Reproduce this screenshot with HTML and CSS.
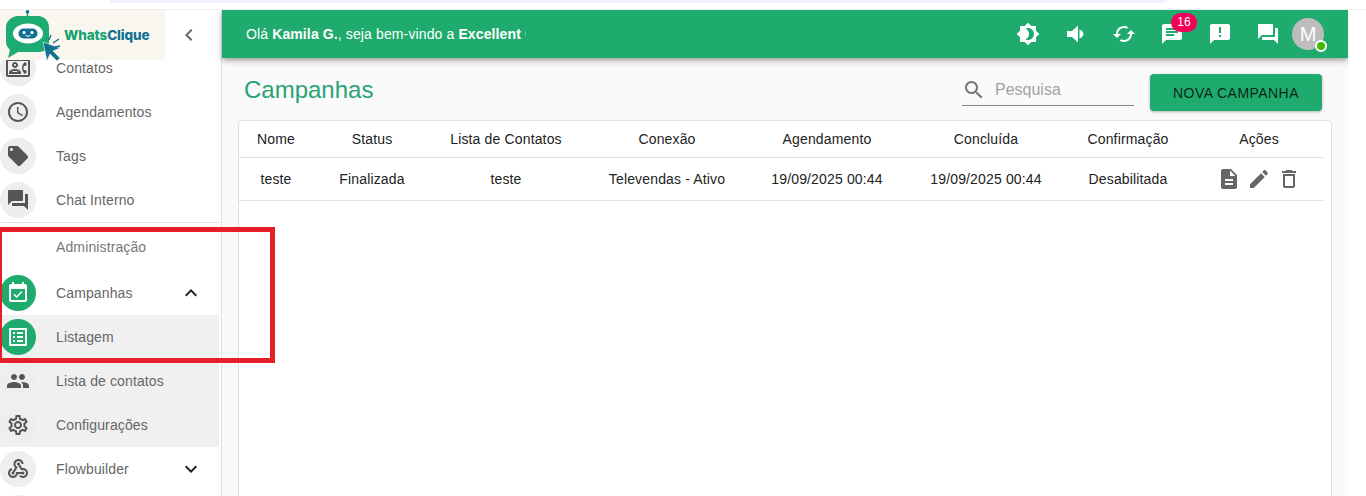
FILE: index.html
```html
<!DOCTYPE html>
<html lang="pt-BR">
<head>
<meta charset="utf-8">
<title>WhatsClique - Campanhas</title>
<link rel="stylesheet" href="styles.css">
</head>
<body>
<svg class="defs" aria-hidden="true">
  <symbol id="i-contact" viewBox="0 0 24 24"><path d="M22 3H2C.9 3 0 3.9 0 5v14c0 1.1.9 2 2 2h20c1.1 0 1.99-.9 1.99-2L24 5c0-1.1-.9-2-2-2zm0 16H2V5h20v14zm-2.99-1.01L21 16l-1.51-2h-1.64c-.22-.63-.35-1.3-.35-2s.13-1.37.35-2h1.64L21 8l-1.99-1.99c-1.31.98-2.28 2.37-2.73 3.99-.18.64-.28 1.31-.28 2s.1 1.36.28 2c.45 1.61 1.42 3.01 2.73 3.99zM9 12c1.65 0 3-1.35 3-3s-1.35-3-3-3-3 1.35-3 3 1.35 3 3 3zm0-4c.55 0 1 .45 1 1s-.45 1-1 1-1-.45-1-1 .45-1 1-1zm6 8.59c0-2.5-3.97-3.58-6-3.58s-6 1.08-6 3.58V18h12v-1.41zM5.48 16c.74-.5 2.22-1 3.52-1s2.77.49 3.52 1H5.48z"/></symbol>
  <symbol id="i-clock" viewBox="0 0 24 24"><path d="M11.99 2C6.47 2 2 6.48 2 12s4.47 10 9.99 10C17.52 22 22 17.52 22 12S17.52 2 11.99 2zM12 20c-4.42 0-8-3.58-8-8s3.58-8 8-8 8 3.58 8 8-3.58 8-8 8z"/><path d="M12.5 7H11v6l5.25 3.15.75-1.23-4.5-2.67z"/></symbol>
  <symbol id="i-tag" viewBox="0 0 24 24"><path d="M21.41 11.58l-9-9C12.05 2.22 11.55 2 11 2H4c-1.1 0-2 .9-2 2v7c0 .55.22 1.05.59 1.42l9 9c.36.36.86.58 1.41.58.55 0 1.05-.22 1.41-.59l7-7c.37-.36.59-.86.59-1.41 0-.55-.23-1.06-.59-1.42zM5.5 7C4.67 7 4 6.33 4 5.5S4.67 4 5.5 4 7 4.67 7 5.5 6.33 7 5.5 7z"/></symbol>
  <symbol id="i-forum" viewBox="0 0 24 24"><path d="M21 6h-2v9H6v2c0 .55.45 1 1 1h11l4 4V7c0-.55-.45-1-1-1zm-4 6V3c0-.55-.45-1-1-1H3c-.55 0-1 .45-1 1v14l4-4h10c.55 0 1-.45 1-1z"/></symbol>
  <symbol id="i-event" viewBox="0 0 24 24"><path d="M16.53 11.06L15.47 10l-4.88 4.88-2.12-2.12-1.06 1.06L10.59 17l5.94-5.94zM19 3h-1V1h-2v2H8V1H6v2H5c-1.11 0-1.99.9-1.99 2L3 19c0 1.1.89 2 2 2h14c1.1 0 2-.9 2-2V5c0-1.1-.9-2-2-2zm0 16H5V8h14v11z"/></symbol>
  <symbol id="i-list" viewBox="0 0 24 24"><path d="M19 5v14H5V5h14m1.1-2H3.9c-.5 0-.9.4-.9.9v16.2c0 .4.4.9.9.9h16.2c.4 0 .9-.5.9-.9V3.9c0-.5-.5-.9-.9-.9zM11 7h6v2h-6V7zm0 4h6v2h-6v-2zm0 4h6v2h-6zM7 7h2v2H7zm0 4h2v2H7zm0 4h2v2H7z"/></symbol>
  <symbol id="i-people" viewBox="0 0 24 24"><path d="M16 11c1.66 0 2.99-1.34 2.99-3S17.66 5 16 5c-1.66 0-3 1.34-3 3s1.34 3 3 3zm-8 0c1.66 0 2.99-1.34 2.99-3S9.66 5 8 5C6.34 5 5 6.34 5 8s1.34 3 3 3zm0 2c-2.33 0-7 1.17-7 3.5V19h14v-2.5c0-2.33-4.67-3.5-7-3.5zm8 0c-.29 0-.62.02-.97.05 1.16.84 1.97 1.97 1.97 3.45V19h6v-2.5c0-2.33-4.67-3.5-7-3.5z"/></symbol>
  <symbol id="i-gear" viewBox="0 0 24 24"><path d="M19.43 12.98c.04-.32.07-.64.07-.98 0-.34-.03-.66-.07-.98l2.11-1.65c.19-.15.24-.42.12-.64l-2-3.46c-.09-.16-.26-.25-.44-.25-.06 0-.12.01-.17.03l-2.49 1c-.52-.4-1.08-.73-1.69-.98l-.38-2.65C14.46 2.18 14.25 2 14 2h-4c-.25 0-.46.18-.49.42l-.38 2.65c-.61.25-1.17.59-1.69.98l-2.49-1c-.06-.02-.12-.03-.18-.03-.17 0-.34.09-.43.25l-2 3.46c-.13.22-.07.49.12.64l2.11 1.65c-.04.32-.07.65-.07.98 0 .33.03.66.07.98l-2.11 1.65c-.19.15-.24.42-.12.64l2 3.46c.09.16.26.25.44.25.06 0 .12-.01.17-.03l2.49-1c.52.4 1.08.73 1.69.98l.38 2.65c.03.24.24.42.49.42h4c.25 0 .46-.18.49-.42l.38-2.65c.61-.25 1.17-.59 1.69-.98l2.49 1c.06.02.12.03.18.03.17 0 .34-.09.43-.25l2-3.46c.12-.22.07-.49-.12-.64l-2.11-1.65zm-1.98-1.71c.04.31.05.52.05.73 0 .21-.02.43-.05.73l-.14 1.13.89.7 1.08.84-.7 1.21-1.27-.51-1.04-.42-.9.68c-.43.32-.84.56-1.25.73l-1.06.43-.16 1.13-.2 1.35h-1.4l-.19-1.35-.16-1.13-1.06-.43c-.43-.18-.83-.41-1.23-.71l-.91-.7-1.06.43-1.27.51-.7-1.21 1.08-.84.89-.7-.14-1.13c-.03-.31-.05-.54-.05-.74s.02-.43.05-.73l.14-1.13-.89-.7-1.08-.84.7-1.21 1.27.51 1.04.42.9-.68c.43-.32.84-.56 1.25-.73l1.06-.43.16-1.13.2-1.35h1.39l.19 1.35.16 1.13 1.06.43c.43.18.83.41 1.23.71l.91.7 1.06-.43 1.27-.51.7 1.21-1.07.85-.89.7.14 1.13zM12 8c-2.21 0-4 1.79-4 4s1.79 4 4 4 4-1.79 4-4-1.79-4-4-4zm0 6c-1.1 0-2-.9-2-2s.9-2 2-2 2 .9 2 2-.9 2-2 2z"/></symbol>
  <symbol id="i-webhook" viewBox="0 0 24 24"><path d="M10 15h5.88c.27-.31.67-.5 1.12-.5.83 0 1.5.67 1.5 1.5s-.67 1.5-1.5 1.5c-.44 0-.84-.19-1.12-.5H11.9c-.46 2.28-2.48 4-4.9 4-2.76 0-5-2.24-5-5 0-2.42 1.72-4.44 4-4.9v2.07c-1.16.41-2 1.53-2 2.83 0 1.65 1.35 3 3 3s3-1.35 3-3v-1zm2.5-11c1.65 0 3 1.35 3 3h2c0-2.76-2.24-5-5-5s-5 2.24-5 5c0 1.43.6 2.71 1.55 3.62l-2.35 3.9c-.68.14-1.2.75-1.2 1.48 0 .83.67 1.5 1.5 1.5s1.5-.67 1.5-1.5c0-.16-.02-.31-.07-.45l3.38-5.63C10.49 9.61 9.5 8.42 9.5 7c0-1.65 1.35-3 3-3zm4.5 9c-.64 0-1.23.2-1.72.54l-3.05-5.07C11.53 8.35 11 7.74 11 7c0-.83.67-1.5 1.5-1.5S14 6.17 14 7c0 .15-.02.29-.06.43l2.19 3.65c.28-.05.57-.08.87-.08 2.76 0 5 2.24 5 5s-2.24 5-5 5c-1.85 0-3.47-1.01-4.33-2.5h2.67c.48.32 1.05.5 1.66.5 1.65 0 3-1.35 3-3s-1.35-3-3-3z"/></symbol>
  <symbol id="i-left" viewBox="0 0 24 24"><path d="M15.41 7.41L14 6l-6 6 6 6 1.41-1.41L10.83 12z"/></symbol>
  <symbol id="i-less" viewBox="0 0 24 24"><path d="M12 8l-6 6 1.41 1.41L12 10.83l4.59 4.58L18 14z"/></symbol>
  <symbol id="i-more" viewBox="0 0 24 24"><path d="M16.59 8.59L12 13.17 7.41 8.59 6 10l6 6 6-6z"/></symbol>
  <symbol id="i-bright" viewBox="0 0 24 24"><path d="M20 8.69V4h-4.69L12 .69 8.69 4H4v4.69L.69 12 4 15.31V20h4.69L12 23.31 15.31 20H20v-4.69L23.31 12 20 8.69zM12 18c-.89 0-1.74-.2-2.5-.55C11.56 16.5 13 14.42 13 12s-1.44-4.5-3.5-5.45C10.26 6.2 11.11 6 12 6c3.31 0 6 2.69 6 6s-2.69 6-6 6z"/></symbol>
  <symbol id="i-volume" viewBox="0 0 24 24"><path d="M3 9v6h5l6 5.500V3.500L8 9H3zM15.500 7.500v9c2.500-1 4-2.700 4-4.500s-1.500-3.500-4-4.500z"/></symbol>
  <symbol id="i-cached" viewBox="0 0 24 24"><path d="M19 8l-4 4h3c0 3.31-2.69 6-6 6-1.01 0-1.97-.25-2.8-.7l-1.46 1.46C8.97 19.54 10.43 20 12 20c4.42 0 8-3.58 8-8h3l-4-4zM6 12c0-3.31 2.69-6 6-6 1.01 0 1.97.25 2.8.7l1.46-1.46C15.03 4.46 13.57 4 12 4c-4.42 0-8 3.58-8 8H1l4 4 4-4H6z"/></symbol>
  <symbol id="i-chat" viewBox="0 0 24 24"><path d="M20 2H4c-1.1 0-1.99.9-1.99 2L2 22l4-4h14c1.1 0 2-.9 2-2V4c0-1.1-.9-2-2-2zM6 9h12v2H6V9zm8 5H6v-2h8v2zm4-6H6V6h12v2z"/></symbol>
  <symbol id="i-alert" viewBox="0 0 24 24"><path d="M20 2H4c-1.1 0-1.99.9-1.99 2L2 22l4-4h14c1.1 0 2-.9 2-2V4c0-1.1-.9-2-2-2zm-7 9h-2V5h2v6zm0 4h-2v-2h2v2z"/></symbol>
  <symbol id="i-search" viewBox="0 0 24 24"><path d="M15.5 14h-.79l-.28-.27C15.41 12.59 16 11.11 16 9.5 16 5.91 13.09 3 9.5 3S3 5.91 3 9.5 5.91 16 9.5 16c1.61 0 3.09-.59 4.23-1.57l.27.28v.79l5 4.99L20.49 19l-4.99-5zm-6 0C7.01 14 5 11.99 5 9.5S7.01 5 9.5 5 14 7.01 14 9.5 11.99 14 9.5 14z"/></symbol>
  <symbol id="i-doc" viewBox="0 0 24 24"><path d="M14 2H6c-1.1 0-1.99.9-1.99 2L4 20c0 1.1.89 2 1.99 2H18c1.1 0 2-.9 2-2V8l-6-6zm2 16H8v-2h8v2zm0-4H8v-2h8v2zm-3-5V3.5L18.5 9H13z"/></symbol>
  <symbol id="i-edit" viewBox="0 0 24 24"><path d="M3 17.25V21h3.75L17.81 9.94l-3.75-3.75L3 17.25zM20.71 7.04c.39-.39.39-1.02 0-1.41l-2.34-2.34c-.39-.39-1.02-.39-1.41 0l-1.83 1.83 3.75 3.75 1.83-1.83z"/></symbol>
  <symbol id="i-trash" viewBox="0 0 24 24"><path d="M6 19c0 1.1.9 2 2 2h8c1.1 0 2-.9 2-2V7H6v12zM8 9h8v10H8V9zm7.5-5l-1-1h-5l-1 1H5v2h14V4z"/></symbol>
</svg>

<div class="tabstrip"><div class="tabstrip-fill"></div></div>

<div class="app">
  <aside class="sidebar">
    <div class="brand">
      <div class="logo">
        <svg class="logo-mark" viewBox="0 0 64 50">
          <path d="M27.500 1v7" stroke="#15a06d" stroke-width="1.500"/>
          <circle cx="27.500" cy="1.800" r="1.800" fill="#10708f"/>
          <path d="M18 6h20c6 0 11 5 11 11v15c0 6-4 10-10 10H18l-10 6 2-8c-2-2-4-5-4-8V17C6 11 12 6 18 6z" fill="#1cab72"/>
          <ellipse cx="28" cy="23.500" rx="15" ry="10" fill="#fff"/>
          <rect x="18.500" y="18.500" width="19" height="10" rx="5" fill="#10708f"/>
          <circle cx="24" cy="22.500" r="1.600" fill="#fff"/>
          <circle cx="32" cy="22.500" r="1.600" fill="#fff"/>
          <path d="M25.500 25.500q2.500 1.500 5 0" stroke="#fff" stroke-width="1" fill="none"/>
          <path d="M43 32l17 6-7 3 7 7-3 3-7-7-3 7z" fill="#10708f" stroke="#f9f6f0" stroke-width=".6"/>
          <path d="M49 30l2-5M53 33l6-4M55 37l5-1" stroke="#10708f" stroke-width="1.300"/>
        </svg>
        <span class="logo-name"><span class="logo-green">Whats</span><span class="logo-blue">Clique</span></span>
      </div>
      <svg class="chevron-left"><use href="#i-left"/></svg>
    </div>
    <nav class="menu">
      <ul class="menu-list">
        <li class="item"><span class="disc"><svg><use href="#i-contact"/></svg></span><span class="label">Contatos</span></li>
        <li class="item"><span class="disc"><svg><use href="#i-clock"/></svg></span><span class="label">Agendamentos</span></li>
        <li class="item"><span class="disc"><svg><use href="#i-tag"/></svg></span><span class="label">Tags</span></li>
        <li class="item"><span class="disc"><svg><use href="#i-forum"/></svg></span><span class="label">Chat Interno</span></li>
        <li class="divider"></li>
        <li class="subheader">Administração</li>
        <li class="item"><span class="disc active"><svg><use href="#i-event"/></svg></span><span class="label">Campanhas</span><svg class="expand"><use href="#i-less"/></svg></li>
        <li class="submenu">
          <ul class="menu-list">
            <li class="item"><span class="disc active"><svg><use href="#i-list"/></svg></span><span class="label">Listagem</span></li>
            <li class="item"><span class="disc"><svg><use href="#i-people"/></svg></span><span class="label">Lista de contatos</span></li>
            <li class="item"><span class="disc"><svg><use href="#i-gear"/></svg></span><span class="label">Configurações</span></li>
          </ul>
        </li>
        <li class="item"><span class="disc"><svg><use href="#i-webhook"/></svg></span><span class="label">Flowbuilder</span><svg class="expand"><use href="#i-more"/></svg></li>
        <li class="item"><span class="disc"></span></li>
      </ul>
    </nav>
  </aside>

  <div class="page">
    <header class="appbar">
      <div class="greeting">Olá <b>Kamila G.</b>, seja bem-vindo a <b>Excellent Clique</b></div>
      <div class="appbar-icons">
        <svg><use href="#i-bright"/></svg>
        <svg><use href="#i-volume"/></svg>
        <svg><use href="#i-cached"/></svg>
        <span class="notify"><svg><use href="#i-chat"/></svg><span class="badge">16</span></span>
        <svg><use href="#i-alert"/></svg>
        <svg><use href="#i-forum"/></svg>
        <span class="avatar">M<span class="online"></span></span>
      </div>
    </header>

    <main class="content">
      <div class="title-row">
        <h1 class="title">Campanhas</h1>
        <div class="search">
          <svg><use href="#i-search"/></svg>
          <span>Pesquisa</span>
        </div>
        <button class="new-btn">NOVA CAMPANHA</button>
      </div>
      <div class="card">
        <table class="grid">
          <colgroup>
            <col class="c-name"><col class="c-status"><col class="c-list"><col class="c-conn"><col class="c-sched"><col class="c-done"><col class="c-conf"><col class="c-acts">
          </colgroup>
          <thead>
            <tr><th>Nome</th><th>Status</th><th>Lista de Contatos</th><th>Conexão</th><th>Agendamento</th><th>Concluída</th><th>Confirmação</th><th class="acts">Ações</th></tr>
          </thead>
          <tbody>
            <tr>
              <td>teste</td><td>Finalizada</td><td>teste</td><td>Televendas - Ativo</td><td>19/09/2025 00:44</td><td>19/09/2025 00:44</td><td>Desabilitada</td>
              <td class="acts"><span class="act-icons"><svg><use href="#i-doc"/></svg><svg><use href="#i-edit"/></svg><svg><use href="#i-trash"/></svg></span></td>
            </tr>
          </tbody>
        </table>
      </div>
    </main>
  </div>
</div>

<div class="highlight"></div>
</body>
</html>
```

FILE: styles.css
```css
* { box-sizing: border-box; }

html, body { height: 100%; }

body {
  margin: 0;
  background: #fff;
  color: #333;
  font-family: "Liberation Sans", Arial, sans-serif;
  font-size: 14px;
  overflow: hidden;
}

.defs { display: none; }

svg { fill: currentColor; display: block; }

/* browser strip on top of the capture */
.tabstrip { height: 10px; background: #fff; border-bottom: 1px solid #eee; }
.tabstrip-fill {
  height: 3px;
  margin: 0 201px 0 110px;
  background: #eef2fb;
  border-radius: 0 0 12px 12px;
}

.app {
  display: flex;
  width: 1348px;
  height: 486px;
  overflow: hidden;
}

/* sidebar */
.sidebar {
  width: 222px;
  flex: none;
  padding-right: 2px;
  border-right: 1px solid #e0e0e0;
  display: flex;
  flex-direction: column;
  overflow: hidden;
}

.brand {
  height: 50px;
  flex: none;
  display: flex;
  align-items: center;
  position: relative;
  z-index: 1;
}

.logo {
  width: 165px;
  height: 50px;
  background: #f9f6f0;
  display: flex;
  align-items: center;
}
.logo-mark { width: 64px; height: 50px; flex: none; overflow: visible; }
.logo-name { font-family: Inter, sans-serif; font-weight: 800; font-size: 13.5px; letter-spacing: -0.1px; }
.logo-green { color: #15a372; }
.logo-blue { color: #10708f; }

.chevron-left { width: 24px; height: 24px; margin-left: 12px; color: #666; }

.menu { flex: 1; overflow: hidden; }
.menu > .menu-list { margin-top: -14px; }

.menu-list { list-style: none; margin: 0; padding: 0; }

.item {
  height: 44px;
  display: flex;
  align-items: center;
  color: #666;
}

.disc {
  width: 36px;
  height: 36px;
  flex: none;
  border-radius: 50%;
  background: #eee;
  color: #555;
  display: flex;
  align-items: center;
  justify-content: center;
}
.disc svg { width: 24px; height: 24px; }
.disc.active { background: #1fab6e; color: #fff; }

.label { margin-left: 20px; letter-spacing: .12px; }

.expand { width: 24px; height: 24px; margin-left: auto; margin-right: 16px; color: #222; }

.divider { height: 1px; background: #e0e0e0; }
.subheader { height: 48px; line-height: 48px; padding-left: 56px; color: #777; letter-spacing: .12px; }
.submenu { background: #f0f0f0; }

/* main area */
.page {
  flex: 1;
  min-width: 0;
  background: #fafafa;
  display: flex;
  flex-direction: column;
}

.appbar {
  height: 48px;
  flex: none;
  background: #1fab6e;
  color: #fff;
  display: flex;
  align-items: center;
  padding-left: 24px;
  box-shadow: 0 2px 4px -1px rgba(0,0,0,.2), 0 4px 5px 0 rgba(0,0,0,.14), 0 1px 10px 0 rgba(0,0,0,.12);
  position: relative;
}

.greeting { width: 280px; white-space: nowrap; overflow: hidden; letter-spacing: .12px; }

.appbar-icons {
  margin-left: auto;
  margin-right: 24px;
  display: flex;
  align-items: center;
  gap: 24px;
}
.appbar-icons svg { width: 24px; height: 24px; }

.notify { position: relative; }
.badge {
  position: absolute;
  top: -9px;
  left: 11px;
  min-width: 26px;
  height: 19px;
  border-radius: 10px;
  background: #f50057;
  font-size: 12px;
  line-height: 19px;
  text-align: center;
}

.avatar {
  width: 32px;
  height: 32px;
  margin-left: -12px;
  border-radius: 50%;
  background: #bdbdbd;
  font-size: 20px;
  line-height: 32px;
  text-align: center;
  position: relative;
}
.online {
  position: absolute;
  right: -3px;
  bottom: -2px;
  width: 12px;
  height: 12px;
  border-radius: 50%;
  background: #44b700;
  border: 2px solid #fff;
}

.content {
  flex: 1;
  min-height: 0;
  display: flex;
  flex-direction: column;
  padding: 16px 16px 0;
}

.title-row {
  height: 46px;
  flex: none;
  display: flex;
  align-items: flex-start;
}
.title {
  margin: 0 0 0 6px;
  font-size: 24px;
  font-weight: 400;
  line-height: 32px;
  color: #28a474;
}

.search {
  width: 172px;
  height: 32px;
  margin-left: auto;
  border-bottom: 1px solid #888;
  display: flex;
  align-items: center;
  color: #a2a2a2;
  font-size: 16px;
}
.search svg { width: 24px; height: 24px; color: #757575; margin-right: 9px; }

.new-btn {
  width: 172px;
  height: 37px;
  margin: 0 10px 0 16px;
  border: 0;
  border-radius: 4px;
  background: #1fab6e;
  color: rgba(0,0,0,.8);
  font: 14px "Liberation Sans", Arial, sans-serif;
  letter-spacing: .45px;
  box-shadow: 0 1px 3px rgba(0,0,0,.3);
}

.card {
  flex: 1;
  margin-bottom: -4px;
  background: #fff;
  border: 1px solid #e0e0e0;
  border-radius: 4px;
  padding-right: 8px;
}

.grid { width: 100%; table-layout: fixed; border-collapse: collapse; }
.c-name { width: 74px; }
.c-status { width: 118px; }
.c-list { width: 150px; }
.c-conn { width: 172px; }
.c-sched { width: 148px; }
.c-done { width: 170px; }
.c-conf { width: 114px; }

.grid th, .grid td {
  text-align: center;
  font-weight: 400;
  color: #222;
  border-bottom: 1px solid #e0e0e0;
  padding: 0;
  white-space: nowrap;
  letter-spacing: .15px;
}
.grid th { height: 36px; }
.grid td { height: 43px; }
.grid .acts { padding-left: 10px; }

.act-icons { display: inline-flex; gap: 6px; color: #666; vertical-align: middle; }
.act-icons svg { width: 24px; height: 24px; }

/* red annotation drawn over the capture */
.highlight {
  position: absolute;
  left: -3px;
  top: 227px;
  width: 278px;
  height: 136px;
  border: 5px solid #e61e2a;
  pointer-events: none;
}
```
